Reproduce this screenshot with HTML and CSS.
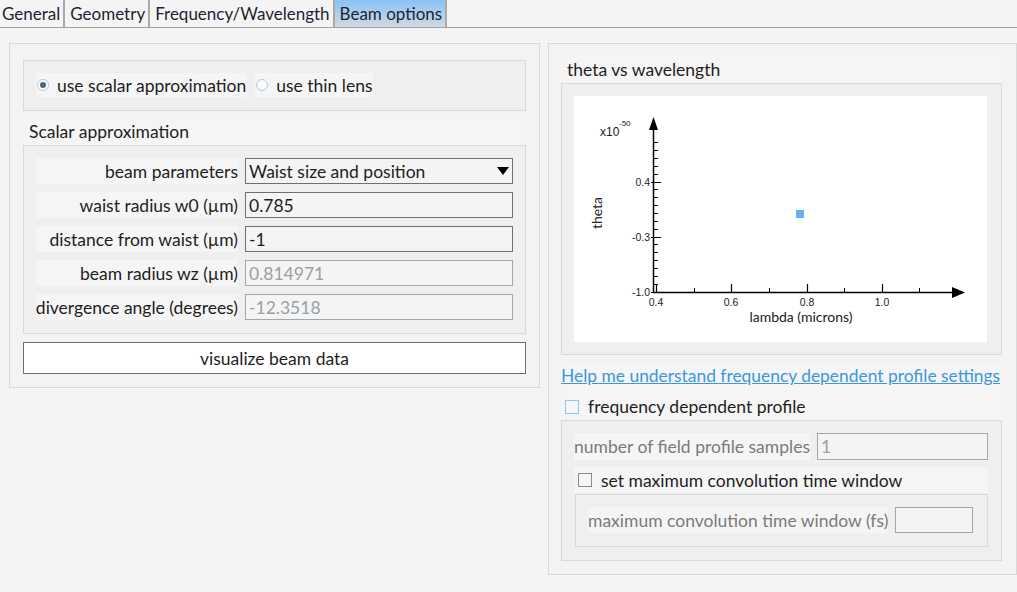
FILE: index.html
```html
<!DOCTYPE html>
<html lang="en">
<head>
    <meta charset="UTF-8">
    <title>Beam options</title>
    <link rel="stylesheet" href="styles.css">
</head>
<body>
    <div class="tabs">
        <div class="tab first">General</div>
        <div class="tab">Geometry</div>
        <div class="tab">Frequency/Wavelength</div>
        <div class="tab active">Beam options</div>
    </div>

    <div class="main">
        <div class="panel left">
            <div class="group radios">
                <label class="radio-item"><span class="radio checked"></span>use scalar approximation</label>
                <label class="radio-item"><span class="radio"></span>use thin lens</label>
            </div>

            <div class="section-title">Scalar approximation</div>
            <div class="group form">
                <div class="row">
                    <span class="lbl">beam parameters</span>
                    <div class="field select">Waist size and position<span class="caret"></span></div>
                </div>
                <div class="row">
                    <span class="lbl">waist radius w0 (µm)</span>
                    <div class="field">0.785</div>
                </div>
                <div class="row">
                    <span class="lbl">distance from waist (µm)</span>
                    <div class="field">-1</div>
                </div>
                <div class="row">
                    <span class="lbl">beam radius wz (µm)</span>
                    <div class="field disabled">0.814971</div>
                </div>
                <div class="row">
                    <span class="lbl">divergence angle (degrees)</span>
                    <div class="field disabled">-12.3518</div>
                </div>
            </div>

            <button class="btn">visualize beam data</button>
        </div>

        <div class="panel right">
            <div class="section-title">theta vs wavelength</div>
            <div class="group chart-box">
                <svg class="chart" width="413" height="246" viewBox="0 0 413 246">
                    <!-- y axis -->
                    <line x1="79.5" y1="33" x2="79.5" y2="197" stroke="#000" stroke-width="1.5"/>
                    <polygon points="79.5,21 75,34 84,34" fill="#000"/>
                    <path d="M77 86.5H87M77 141.5H87M77 196.5H87" stroke="#000" stroke-width="1.2"/>
                    <path d="M79 188.5H84M79 180.5H84M79 172.5H84M79 164.5H84M79 156.5H84M79 148.5H84
                             M79 133.5H84M79 125.5H84M79 117.5H84M79 109.5H84M79 101.5H84M79 93.5H84
                             M79 78.5H84M79 70.5H84M79 62.5H84M79 54.5H84M79 46.5H84" stroke="#000" stroke-width="1"/>
                    <!-- x axis -->
                    <line x1="79" y1="196.5" x2="380" y2="196.5" stroke="#000" stroke-width="1.5"/>
                    <polygon points="378,191 391,196.5 378,202" fill="#000"/>
                    <path d="M82.5 188V196M157.5 188V196M233.5 188V196M308.5 188V196" stroke="#000" stroke-width="1.2"/>
                    <path d="M120.5 192V196M195.5 192V196M270.5 192V196M345.5 192V196" stroke="#000" stroke-width="1"/>
                    <!-- tick labels -->
                    <g class="tick">
                        <text x="76" y="90" text-anchor="end">0.4</text>
                        <text x="76" y="145" text-anchor="end">-0.3</text>
                        <text x="76" y="200" text-anchor="end">-1.0</text>
                        <text x="82" y="210" text-anchor="middle">0.4</text>
                        <text x="157" y="210" text-anchor="middle">0.6</text>
                        <text x="233" y="210" text-anchor="middle">0.8</text>
                        <text x="308" y="210" text-anchor="middle">1.0</text>
                    </g>
                    <text class="exp" x="26" y="40">x10</text>
                    <text class="exp-sup" x="45" y="30">-50</text>
                    <text class="axis-title" transform="translate(28 117) rotate(-90)" text-anchor="middle">theta</text>
                    <text class="axis-title" x="227" y="226" text-anchor="middle">lambda (microns)</text>
                    <rect x="222" y="114" width="8" height="8" fill="#62b2f5"/>
                </svg>
            </div>

            <div class="link-row"><a href="#">Help me understand frequency dependent profile settings</a></div>
            <div class="check-row"><span class="check"></span>frequency dependent profile</div>

            <div class="group sub">
                <div class="row tall">
                    <span class="lbl dim fit">number of field profile samples</span>
                    <div class="field disabled">1</div>
                </div>
                <div class="check-row inner"><span class="check gray"></span>set maximum convolution time window</div>
                <div class="group sub-inner">
                    <div class="row">
                        <span class="lbl dim fit">maximum convolution time window (fs)</span>
                        <div class="field disabled short"></div>
                    </div>
                </div>
            </div>
        </div>
    </div>
</body>
</html>
```
FILE: styles.css
```css
body {
    margin: 0;
    background: #f4f4f4;
    font-family: Lato, 'Noto Sans', sans-serif;
    font-size: 17.5px;
    color: #1e1e1e;
}

.tabs {
    display: flex;
    height: 28px;
    box-sizing: border-box;
    border-bottom: 1px solid #a3a3a3;
    font-size: 17px;
}

.tab {
    display: flex;
    align-items: center;
    padding: 0 3px 0 5px;
    border-right: 2px solid #a9a9a9;
    color: #1d1f33;
}

.tab.first {
    padding-left: 2px;
}

.tab.active {
    background: linear-gradient(#89c2f5, #d0dae2);
}

.main {
    display: flex;
    align-items: flex-start;
    gap: 8px;
    padding: 15px 0 0 9px;
}

.panel {
    box-sizing: border-box;
    background: #f3f3f3;
    border: 1px solid #d9d9d9;
    display: flex;
    flex-direction: column;
}

.panel.left {
    width: 531px;
    padding: 16px 13px 13px 13px;
}

.panel.right {
    width: 469px;
    padding: 12px 14px 13px 12px;
}

.group {
    background: #efefef;
    border: 1px solid #d9d9d9;
}

.radios {
    display: flex;
    gap: 8px;
    padding: 12px 12px 13px 12px;
}

.radio-item {
    display: flex;
    align-items: center;
    height: 24px;
    padding: 0 1px;
    background: #f5f5f5;
}

.radio {
    width: 10px;
    height: 10px;
    border: 1px solid #a8cdec;
    border-radius: 50%;
    background: #fbfbfb;
    margin-right: 8px;
    position: relative;
}

.radio.checked::after {
    content: "";
    position: absolute;
    left: 2px;
    top: 2px;
    width: 6px;
    height: 6px;
    border-radius: 50%;
    background: #5c6276;
}

.section-title {
    height: 27px;
    margin-top: 7px;
    padding-left: 6px;
    display: flex;
    align-items: center;
    background: #f5f5f5;
}

.panel.right .section-title {
    margin-top: 0;
}

.form {
    display: flex;
    flex-direction: column;
    gap: 8px;
    padding: 12px 12px 13px 12px;
}

.row {
    display: flex;
    gap: 7px;
    height: 26px;
}

.row.tall {
    height: 27px;
}

.lbl {
    width: 202px;
    flex: none;
    display: flex;
    align-items: center;
    justify-content: flex-end;
    background: #f5f5f5;
    white-space: nowrap;
}

.lbl.fit {
    width: auto;
}

.lbl.dim {
    color: #7b7b7b;
}

.field {
    flex: 1;
    box-sizing: border-box;
    display: flex;
    align-items: center;
    padding-left: 3px;
    border: 1px solid #6f6f6f;
    background: #f4f4f4;
    position: relative;
}

.field.disabled {
    border-color: #a6a6a6;
    color: #98a0a8;
}

.field.short {
    flex: none;
    width: 78px;
}

.caret {
    position: absolute;
    right: 3px;
    top: 8px;
    width: 0;
    height: 0;
    border-left: 6px solid transparent;
    border-right: 6px solid transparent;
    border-top: 8px solid #000;
}

.btn {
    margin-top: 8px;
    height: 32px;
    background: #fff;
    border: 1px solid #6f6f6f;
    font-family: inherit;
    font-size: inherit;
    color: inherit;
    padding: 0;
}

.chart-box {
    padding: 12px 13px 12px 12px;
}

.chart {
    display: block;
    background: #fff;
}

.tick {
    font-family: 'Liberation Sans', sans-serif;
    font-size: 10.5px;
    fill: #222;
}

.exp {
    font-family: 'Liberation Sans', sans-serif;
    font-size: 12px;
    fill: #222;
}

.exp-sup {
    font-family: 'Liberation Sans', sans-serif;
    font-size: 8px;
    fill: #222;
}

.axis-title {
    font-family: Lato, sans-serif;
    font-size: 14px;
    fill: #222;
}

.link-row {
    margin-top: 8px;
    height: 30px;
    box-sizing: border-box;
    padding-top: 2px;
    background: #f5f5f5;
    font-size: 17.4px;
    white-space: nowrap;
}

.link-row a {
    color: #3b97de;
}

.check-row {
    height: 27px;
    display: flex;
    align-items: center;
    padding-left: 4px;
    background: #f5f5f5;
}

.check {
    width: 12px;
    height: 12px;
    border: 1px solid #93c6ee;
    background: #f6f6f6;
    margin-right: 9px;
}

.check.gray {
    border-color: #8c8c8c;
}

.sub {
    display: flex;
    flex-direction: column;
    padding: 12px 13px 13px 12px;
}

.check-row.inner {
    margin-top: 7px;
    height: 26px;
}

.sub-inner {
    margin: 1px 0 0 1px;
    padding: 12px 13px 13px 12px;
}
```
